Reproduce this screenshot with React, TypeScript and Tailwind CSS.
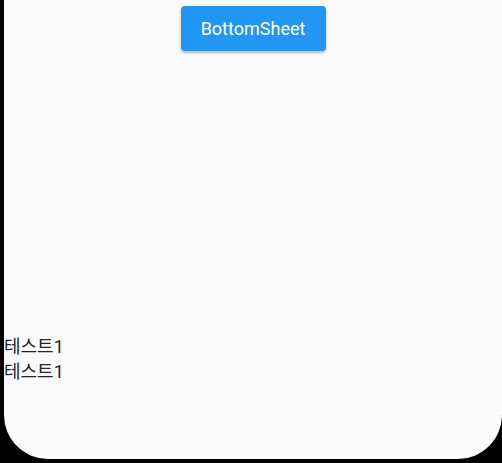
const App = () => {
  return (
    <div className="w-[502px] h-[463px] bg-black overflow-hidden">
      <div className="ml-[4px] h-[459px] bg-[#fafafa] rounded-b-[44px] flex flex-col">
        <div className="flex justify-center pt-[6px]">
          <button className="w-[145px] h-[45px] bg-[#2196f3] text-white rounded-[4px] shadow-[0_2px_3px_rgba(0,0,0,0.25)] font-['Roboto',sans-serif] text-[18px] font-normal">
            BottomSheet
          </button>
        </div>
        <div className="mt-[283px] flex flex-col font-['Roboto','Noto_Sans_CJK_KR',sans-serif] text-[18px] leading-[25px] text-[#262626]">
          <span>테스트1</span>
          <span>테스트1</span>
        </div>
      </div>
    </div>
  )
}

export default App
